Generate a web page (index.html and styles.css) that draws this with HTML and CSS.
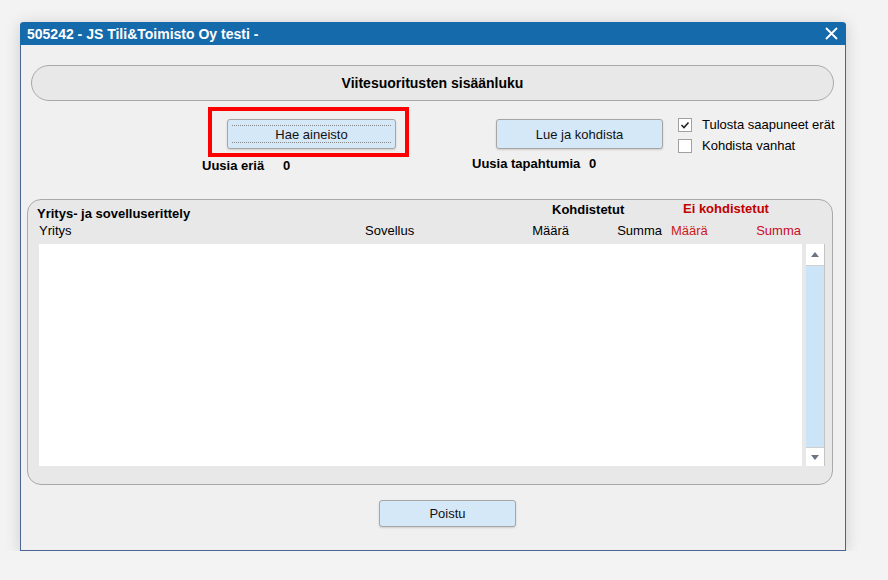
FILE: index.html
```html
<!DOCTYPE html>
<html lang="fi">
<head>
    <meta charset="UTF-8">
    <title>Viitesuoritusten sisäänluku</title>
    <link rel="stylesheet" href="styles.css">
</head>
<body>

    <!-- Dialog window -->
    <div class="window">
        <div class="titlebar">
            <span class="title">505242 - JS Tili&amp;Toimisto Oy testi -</span>
            <svg class="close" width="13" height="13" viewBox="0 0 13 13">
                <path d="M1 1 L12 12 M12 1 L1 12" stroke="#fff" stroke-width="1.8" fill="none"/>
            </svg>
        </div>

        <div class="content">
            <div class="heading">Viitesuoritusten sisäänluku</div>

            <!-- Actions -->
            <div class="controls">
                <div class="col-fetch">
                    <div class="highlight">
                        <button class="btn btn-focus"><span>Hae aineisto</span></button>
                    </div>
                    <div class="stat">
                        <span class="stat-label fetch-label">Uusia eriä</span>
                        <span>0</span>
                    </div>
                </div>

                <div class="col-read">
                    <button class="btn btn-read">Lue ja kohdista</button>
                    <div class="stat">
                        <span class="stat-label read-label">Uusia tapahtumia</span>
                        <span>0</span>
                    </div>
                </div>

                <div class="col-options">
                    <label class="check">
                        <span class="box">
                            <svg width="10" height="10" viewBox="0 0 10 10"><path d="M1.5 5 L4 7.5 L8.5 2.5" stroke="#222" stroke-width="1.6" fill="none"/></svg>
                        </span>
                        Tulosta saapuneet erät
                    </label>
                    <label class="check">
                        <span class="box"></span>
                        Kohdista vanhat
                    </label>
                </div>
            </div>

            <!-- Breakdown group -->
            <div class="group">
                <div class="group-head">
                    <span class="group-title">Yritys- ja sovelluserittely</span>
                    <span class="group-kohd">Kohdistetut</span>
                    <span class="group-ei">Ei kohdistetut</span>
                </div>
                <div class="columns">
                    <span class="c-yritys">Yritys</span>
                    <span class="c-sovellus">Sovellus</span>
                    <span class="c-maara">Määrä</span>
                    <span class="c-summa">Summa</span>
                    <span class="c-ei-maara">Määrä</span>
                    <span class="c-ei-summa">Summa</span>
                </div>
                <div class="list-wrap">
                    <div class="list"></div>
                    <div class="scrollbar">
                        <div class="sb-up"><span class="arrow-up"></span></div>
                        <div class="sb-track"></div>
                        <div class="sb-down"><span class="arrow-down"></span></div>
                    </div>
                </div>
            </div>

            <div class="footer">
                <button class="btn btn-close">Poistu</button>
            </div>
        </div>
    </div>

</body>
</html>
```

FILE: styles.css
```css
/* Page */
body {
    margin: 0;
    background-color: #f3f3f3;
    font-family: "Liberation Sans", Arial, sans-serif;
    font-size: 13px;
    color: #000;
}

/* Dialog window */
.window {
    margin: 22px 0 0 20px;
    width: 826px;
    height: 529px;
    box-sizing: border-box;
    background-color: #f0f0f0;
    border: 1px solid #4a6494;
    border-top: none;
    border-radius: 4px 4px 0 0;
    box-shadow: 0 2px 16px rgba(0, 0, 0, 0.16);
}

.titlebar {
    margin: 0 -1px;
    height: 23px;
    padding: 0 8px 0 7px;
    background-color: #156aab;
    border-radius: 4px 4px 0 0;
    display: flex;
    align-items: center;
    justify-content: space-between;
}

.titlebar .title {
    color: #fff;
    font-weight: bold;
    font-size: 14px;
}

.content {
    padding: 20px 0 0 6px;
}

/* Heading pill */
.heading {
    margin-left: 4px;
    width: 803px;
    height: 36px;
    box-sizing: border-box;
    border: 1px solid #a9a9a9;
    border-radius: 18px;
    background-color: #e8e8e8;
    font-size: 14px;
    font-weight: bold;
    display: flex;
    align-items: center;
    justify-content: center;
}

/* Buttons */
.btn {
    font-family: "Liberation Sans", Arial, sans-serif;
    font-size: 13px;
    color: #111;
    background-color: #d5e8f8;
    border: 1px solid #a6a6a6;
    border-radius: 3px;
    box-shadow: 0 1px 2px rgba(0, 0, 0, 0.15);
    padding: 0;
}

.btn-focus {
    width: 169px;
    height: 30px;
    padding: 5px 4px;
}

.btn-focus span {
    display: flex;
    align-items: center;
    justify-content: center;
    height: 100%;
    box-sizing: border-box;
    border-top: 1px dotted #888;
    border-bottom: 1px dotted #888;
}

.btn-read {
    margin: 12px 0 0 24px;
    width: 167px;
    height: 30px;
}

.btn-close {
    width: 137px;
    height: 27px;
}

/* Controls row */
.controls {
    display: flex;
    margin-top: 6px;
}

.col-fetch {
    margin-left: 175px;
}

.highlight {
    margin-left: 6px;
    width: 201px;
    height: 50px;
    box-sizing: border-box;
    border: 4px solid #ff0000;
    padding: 8px 0 0 15px;
}

.stat {
    display: flex;
    font-weight: bold;
    line-height: 16px;
    margin-top: 1px;
}

.col-read .stat {
    margin-top: 7px;
}

.fetch-label {
    width: 81px;
}

.read-label {
    width: 117px;
}

.col-read {
    margin-left: 63px;
    display: flex;
    flex-direction: column;
}

.col-options {
    margin: 7px 0 0 15px;
}

.check {
    display: flex;
    align-items: center;
    height: 21px;
    gap: 10px;
}

.check .box {
    width: 14px;
    height: 14px;
    box-sizing: border-box;
    border: 1px solid #a0a0a0;
    background-color: #fff;
    display: flex;
    align-items: center;
    justify-content: center;
}

/* Group panel */
.group {
    margin-top: 25px;
    width: 806px;
    height: 286px;
    box-sizing: border-box;
    border: 1px solid #a9a9a9;
    border-radius: 14px;
    background-color: #e8e8e8;
    padding: 2px 0 0 9px;
}

.group-head {
    display: flex;
    align-items: flex-start;
    font-weight: bold;
    line-height: 16px;
    height: 20px;
}

.group-title {
    margin-top: 4px;
    width: 515px;
}

.group-kohd {
    width: 131px;
}

.group-ei {
    margin-top: -1px;
    color: #c00000;
}

.columns {
    display: flex;
    margin: 1px 0 0 2px;
    line-height: 16px;
}

.c-yritys { width: 326px; }
.c-sovellus { width: 125px; }
.c-maara { width: 79px; text-align: right; }
.c-summa { width: 93px; text-align: right; }
.c-ei-maara { width: 60px; padding-left: 9px; color: #cc1a1a; }
.c-ei-summa { width: 70px; text-align: right; color: #cc0a2a; }

/* List with scrollbar */
.list-wrap {
    display: flex;
    margin: 5px 0 0 2px;
    height: 222px;
}

.list {
    width: 763px;
    background-color: #fff;
}

.scrollbar {
    margin-left: 4px;
    width: 19px;
    box-sizing: border-box;
    border-right: 1px solid #c4c4c4;
    display: flex;
    flex-direction: column;
}

.sb-up,
.sb-down {
    background-color: #fff;
    display: flex;
    align-items: center;
    justify-content: center;
}

.sb-up {
    height: 21px;
    border-bottom: 1px solid #d0d0d0;
}

.sb-down {
    height: 18px;
    border-top: 1px solid #d0d0d0;
}

.sb-track {
    flex: 1;
    background-color: #cce4f7;
}

.arrow-up {
    border-left: 4px solid transparent;
    border-right: 4px solid transparent;
    border-bottom: 5px solid #6b7584;
}

.arrow-down {
    border-left: 4px solid transparent;
    border-right: 4px solid transparent;
    border-top: 5px solid #6b7584;
}

/* Footer */
.footer {
    margin: 15px 0 0 352px;
}
```
